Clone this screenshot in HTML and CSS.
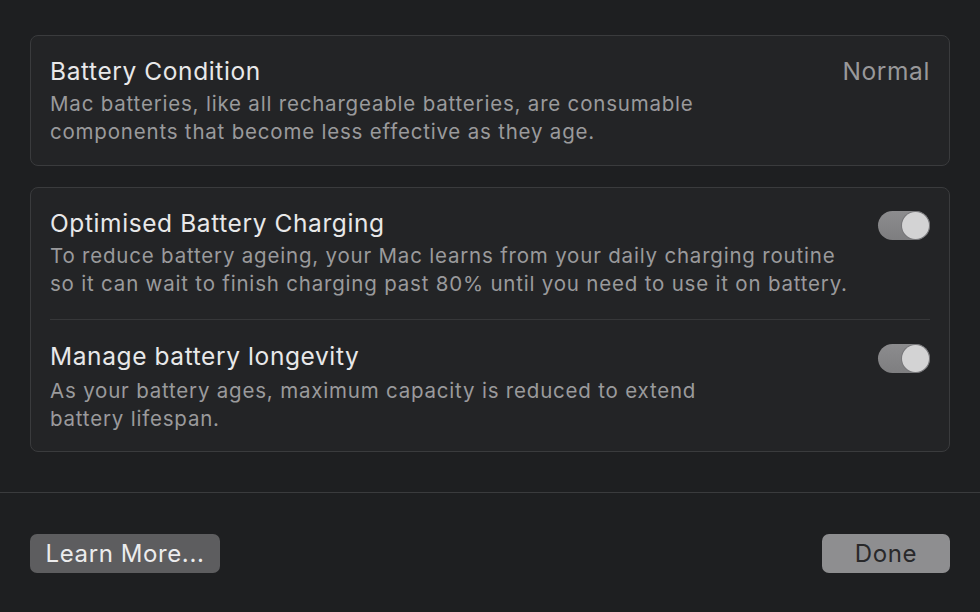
FILE: index.html
```html
<!DOCTYPE html>
<html lang="en">
<head>
	<meta charset="UTF-8">
	<title>Battery Health</title>
	<link rel="stylesheet" href="styles.css">
</head>
<body>
	<div id="sheet">
		<div class="content">
			<div class="card">
				<div class="row">
					<div class="text">
						<h2>Battery Condition</h2>
						<p>Mac batteries, like all rechargeable batteries, are consumable<br>components that become less effective as they age.</p>
					</div>
					<span class="value">Normal</span>
				</div>
			</div>
			<div class="card">
				<div class="row">
					<div class="text">
						<h2>Optimised Battery Charging</h2>
						<p>To reduce battery ageing, your Mac learns from your daily charging routine<br>so it can wait to finish charging past 80% until you need to use it on battery.</p>
					</div>
					<span class="switch on"><i></i></span>
				</div>
				<div class="row">
					<div class="text">
						<h2>Manage battery longevity</h2>
						<p class="low">As your battery ages, maximum capacity is reduced to extend<br>battery lifespan.</p>
					</div>
					<span class="switch on"><i></i></span>
				</div>
			</div>
		</div>
		<div class="footer">
			<button class="btn">Learn More...</button>
			<button class="btn done">Done</button>
		</div>
	</div>
</body>
</html>
```

FILE: styles.css
```css
*{
	margin: 0;
	padding: 0;
	box-sizing: border-box;
}
html, body{
	height: 100%;
}
body{
	background: #1e1f21;
	font-family: Inter, "Liberation Sans", sans-serif;
	color: #e6e6e7;
}
#sheet{
	display: flex;
	flex-direction: column;
	height: 100%;
}
.content{
	padding: 35px 30px 0;
	display: flex;
	flex-direction: column;
	gap: 21px;
}
.card{
	background: #232426;
	border: 1px solid #3a3b3d;
	border-radius: 8px;
	padding: 0 19px;
}
.row{
	display: flex;
	justify-content: space-between;
	align-items: flex-start;
	padding: 20px 0 19px;
}
.row:first-child:not(:last-child){
	padding-bottom: 21px;
}
.row + .row{
	border-top: 1px solid #363739;
	padding-top: 21px;
	padding-bottom: 18px;
}
h2{
	font-size: 24.5px;
	font-weight: 400;
	line-height: 30px;
	letter-spacing: 0.6px;
	color: #e8e8e9;
}
.text p{
	margin-top: 4px;
	font-size: 20.5px;
	line-height: 28px;
	letter-spacing: 0.8px;
	color: #9a9a9c;
}
.text p.low{
	margin-top: 6px;
}
.value{
	font-size: 24.5px;
	line-height: 30px;
	letter-spacing: 0.6px;
	color: #98989a;
}
.switch{
	width: 52px;
	height: 29px;
	margin-top: 3px;
	border-radius: 15px;
	background: linear-gradient(#8c8c8e, #7e7e80);
	display: flex;
	align-items: center;
	justify-content: flex-end;
	padding: 1px;
}
.switch i{
	width: 27px;
	height: 27px;
	border-radius: 50%;
	background: #d3d3d4;
	box-shadow: 0 0 0 1px #77777a;
}
.footer{
	margin-top: 40px;
	border-top: 1px solid #3a3b3d;
	padding: 41px 30px 0;
	display: flex;
	justify-content: space-between;
}
.btn{
	height: 39px;
	border: none;
	border-radius: 7px;
	background: #5d5d5f;
	color: #ececed;
	font-family: Inter, "Liberation Sans", sans-serif;
	font-size: 24px;
	letter-spacing: 0.6px;
	width: 190px;
}
.btn.done{
	width: 128px;
	background: #8e8e90;
	color: #28282a;
}
```
